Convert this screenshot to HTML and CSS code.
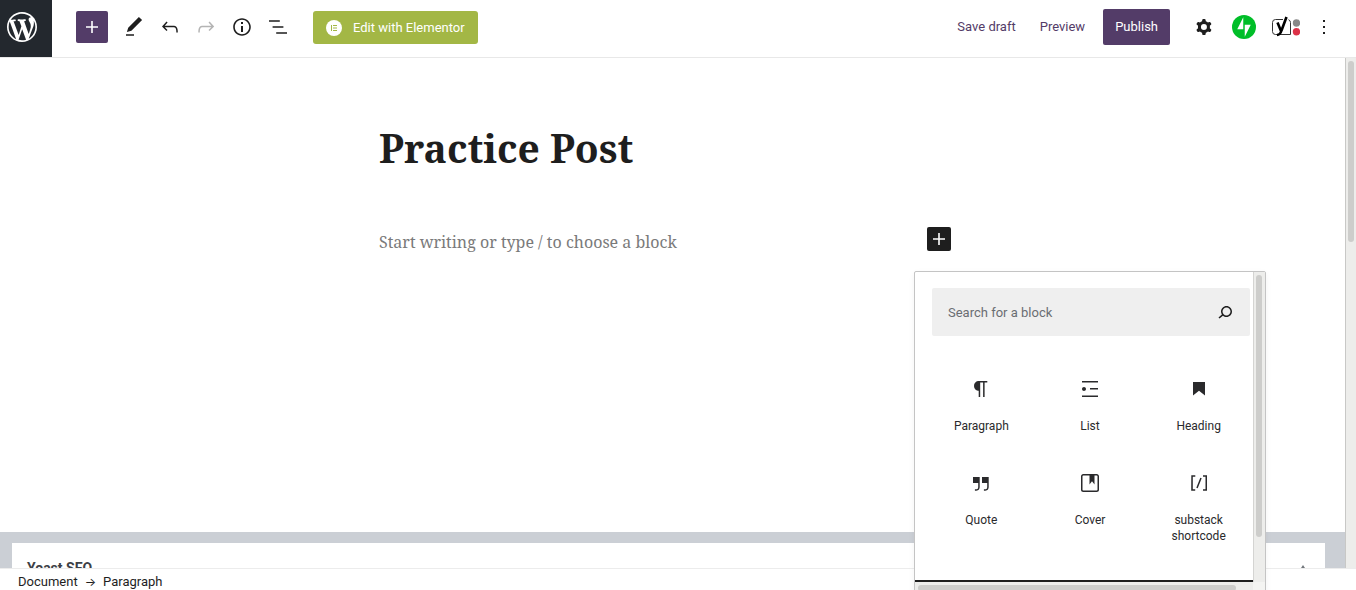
FILE: index.html
```html
<!DOCTYPE html>
<html lang="en">
<head>
    <meta charset="UTF-8">
    <meta name="viewport" content="width=device-width,initial-scale=1">
    <title>Edit Post</title>
    <link rel="stylesheet" href="styles.css">
</head>
<body>
<div class="editor">
    <header class="header">
        <a href="#" class="site-link" aria-label="View posts">
            <svg width="36" height="36" viewBox="-2 -2 24 24"><path d="M20 10c0-5.51-4.49-10-10-10C4.48 0 0 4.49 0 10c0 5.52 4.48 10 10 10 5.51 0 10-4.48 10-10zM7.78 15.37L4.37 6.22c.55-.02 1.17-.08 1.17-.08.5-.06.44-1.13-.06-1.11 0 0-1.45.11-2.37.11-.18 0-.37 0-.58-.01C4.12 2.69 6.87 1.11 10 1.11c2.33 0 4.45.87 6.05 2.34-.68-.11-1.65.39-1.65 1.58 0 .74.45 1.36.9 2.1.35.61.55 1.36.55 2.46 0 1.49-1.4 5-1.4 5l-3.03-8.37c.54-.02.82-.17.82-.17.5-.05.44-1.25-.06-1.22 0 0-1.44.12-2.38.12-.87 0-2.33-.12-2.33-.12-.5-.03-.56 1.2-.06 1.22l.92.08 1.26 3.41zM17.41 10c.24-.64.74-1.87.43-4.25.7 1.29 1.05 2.71 1.05 4.25 0 3.29-1.73 6.24-4.4 7.78.97-2.59 1.94-5.2 2.92-7.78zM6.1 18.09C3.12 16.65 1.11 13.53 1.11 10c0-1.3.23-2.48.72-3.59C3.25 10.3 4.67 14.2 6.1 18.09zm4.03-6.63l2.58 6.98c-.86.29-1.76.45-2.71.45-.79 0-1.57-.11-2.29-.33.81-2.38 1.62-4.74 2.42-7.1z"/></svg>
        </a>
        <div class="tools">
            <button type="button" class="inserter" aria-label="Add block">
                <svg width="24" height="24" viewBox="0 0 24 24"><path d="M18 11.2h-5.2V6h-1.6v5.2H6v1.6h5.2V18h1.6v-5.2H18z"/></svg>
            </button>
            <button type="button" class="tool" aria-label="Tools">
                <svg width="24" height="24" viewBox="0 0 24 24"><path d="M20.1 5.1L16.9 2 6.2 12.7l-1.3 4.4 4.5-1.3L20.1 5.1zM4 20.8h8v-1.5H4v1.5z"/></svg>
            </button>
            <button type="button" class="tool" aria-label="Undo">
                <svg width="24" height="24" viewBox="0 0 24 24"><path d="M18.3 11.7c-.6-.6-1.4-.9-2.3-.9H6.7l2.9-3.3-1.1-1-4.5 5L8.5 16l1-1-2.7-2.7H16c.5 0 .9.2 1.3.5 1 1 1 3.4 1 4.5v.3h1.5v-.2c0-1.5 0-4.3-1.5-5.7z"/></svg>
            </button>
            <button type="button" class="tool" aria-label="Redo" disabled>
                <svg width="24" height="24" viewBox="0 0 24 24"><path d="M15.6 6.5l-1.1 1 2.9 3.3H8c-.9 0-1.7.3-2.3.9-1.4 1.5-1.4 4.2-1.4 5.6v.2h1.5v-.3c0-1.1 0-3.5 1-4.5.3-.3.7-.5 1.3-.5h9.2L14.5 15l1.1 1.1 4.6-4.6-4.6-5z"/></svg>
            </button>
            <button type="button" class="tool" aria-label="Details">
                <svg width="24" height="24" viewBox="0 0 24 24"><path d="M12 3.2c-4.8 0-8.8 3.9-8.8 8.8 0 4.8 3.9 8.8 8.8 8.8 4.8 0 8.8-3.9 8.8-8.8 0-4.8-4-8.8-8.8-8.8zm0 16c-4 0-7.2-3.3-7.2-7.2C4.8 8 8 4.8 12 4.8s7.2 3.3 7.2 7.2c0 4-3.2 7.2-7.2 7.2zM11 17h2v-6h-2v6zm0-8h2V7h-2v2z"/></svg>
            </button>
            <button type="button" class="tool" aria-label="List view">
                <svg width="24" height="24" viewBox="0 0 24 24"><path d="M13.8 5.2H3v1.5h10.8V5.2zm-3.6 12v1.5H21v-1.5H10.2zm7.2-6H6.6v1.5h10.8v-1.5z"/></svg>
            </button>
        </div>
        <button type="button" class="elementor">
            <svg width="16" height="16" viewBox="0 0 16 16"><circle cx="8" cy="8" r="8"/><path class="cut" d="M5 5h1v6H5zM7 5h4v1H7zM7 7.500h4v1H7zM7 10h4v1H7z"/></svg>
            Edit with Elementor
        </button>
        <div class="settings">
            <button type="button" class="text-btn">Save draft</button>
            <button type="button" class="text-btn">Preview</button>
            <button type="button" class="publish">Publish</button>
            <button type="button" class="tool" aria-label="Settings">
                <svg width="24" height="24" viewBox="0 0 24 24"><path fill-rule="evenodd" d="M10.289 4.836A1 1 0 0111.275 4h1.306a1 1 0 01.987.836l.244 1.466c.787.26 1.503.679 2.108 1.218l1.393-.522a1 1 0 011.216.437l.653 1.13a1 1 0 01-.23 1.273l-1.148.944a6.025 6.025 0 010 2.435l1.149.946a1 1 0 01.23 1.272l-.653 1.13a1 1 0 01-1.216.437l-1.394-.522c-.605.54-1.32.958-2.108 1.218l-.244 1.466a1 1 0 01-.987.836h-1.306a1 1 0 01-.986-.836l-.244-1.466a5.995 5.995 0 01-2.108-1.218l-1.394.522a1 1 0 01-1.217-.436l-.653-1.131a1 1 0 01.23-1.272l1.149-.946a6.026 6.026 0 010-2.435l-1.148-.944a1 1 0 01-.23-1.272l.653-1.131a1 1 0 011.217-.437l1.393.522a5.994 5.994 0 012.108-1.218l.244-1.466zM14.929 12a3 3 0 11-6 0 3 3 0 016 0z"/></svg>
            </button>
            <button type="button" class="tool" aria-label="Jetpack">
                <svg width="24" height="24" viewBox="0 0 32 32"><circle fill="#00be28" cx="16" cy="16" r="16"/><path fill="#fff" d="M15 19H7l8-16zM17 29V13h8z"/></svg>
            </button>
            <button type="button" class="tool yoast" aria-label="Yoast SEO">
                <svg width="28" height="24" viewBox="0 0 28 24"><path fill="none" stroke="#333" d="M11 4.500H3.500a3 3 0 0 0-3 3v9a3 3 0 0 0 3 3H18.500V7.500a3 3 0 0 0-2-2.800"/><path fill="none" stroke="#000" stroke-width="2.600" d="M5.500 7.500l3.500 8.500M14.500 2L9.500 15.500c-.8 2.800-1.800 4.500-4.500 4.500"/><circle fill="#888" cx="24.500" cy="8" r="3.700"/><circle fill="#dc3248" cx="24.500" cy="16.700" r="3.700"/></svg>
            </button>
            <button type="button" class="tool" aria-label="Options">
                <svg width="24" height="24" viewBox="0 0 24 24"><path d="M13 19h-2v-2h2v2zm0-6h-2v-2h2v2zm0-6h-2V5h2v2z"/></svg>
            </button>
        </div>
    </header>

    <div class="body">
        <main class="content">
            <div class="canvas">
                <div class="post">
                    <h1 class="post-title">Practice Post</h1>
                    <div class="block">
                        <input type="text" class="block-text" aria-label="Empty block" placeholder="Start writing or type / to choose a block">
                        <div class="appender">
                            <button type="button" class="appender-btn" aria-label="Add block">
                                <svg width="24" height="24" viewBox="0 0 24 24"><path d="M18 11.2h-5.2V6h-1.6v5.2H6v1.6h5.2V18h1.6v-5.2H18z"/></svg>
                            </button>
                            <!-- quick inserter -->
                            <div class="popover">
                                <div class="popover-main">
                                    <div class="search">
                                        <input type="text" aria-label="Search for a block" placeholder="Search for a block">
                                        <button type="button" aria-label="Search">
                                            <svg width="24" height="24" viewBox="0 0 24 24"><path d="M13.5 6C10.5 6 8 8.5 8 11.500c0 1.100.3 2.100.9 3l-3.400 3 1 1.100 3.400-2.900c1 .9 2.200 1.400 3.600 1.400 3 0 5.500-2.500 5.500-5.500C19 8.500 16.500 6 13.500 6zm0 9.500c-2.200 0-4-1.800-4-4s1.800-4 4-4 4 1.800 4 4-1.800 4-4 4z"/></svg>
                                        </button>
                                    </div>
                                    <div class="types">
                                        <button type="button">
                                            <svg width="24" height="24" viewBox="0 0 24 24"><path d="M18.300 4H9.900v-.1l-.9.2c-2.300.4-4 2.400-4 4.800s1.700 4.400 4 4.800l.7.1V20h1.500V5.500h2.900V20h1.500V5.500h2.700V4z"/></svg>
                                            Paragraph
                                        </button>
                                        <button type="button">
                                            <svg width="24" height="24" viewBox="0 0 24 24"><path d="M4 4v1.500h16V4H4zm8 8.500h8V11h-8v1.500zM4 20h16v-1.500H4V20zm4-8c0-1.100-.9-2-2-2s-2 .9-2 2 .9 2 2 2 2-.9 2-2z"/></svg>
                                            List
                                        </button>
                                        <button type="button">
                                            <svg width="24" height="24" viewBox="0 0 24 24"><path d="M6 5v13.600l6-4.800 6 4.800V5z"/></svg>
                                            Heading
                                        </button>
                                        <button type="button">
                                            <svg width="24" height="24" viewBox="0 0 24 24"><path d="M13 6v6h5.200v4c0 .8-.2 1.400-.5 1.700-.6.6-1.600.6-2.500.5h-.3v1.500h.5c1 0 2.300-.1 3.300-1 .6-.6 1-1.600 1-2.800V6H13zm-9 6h5.200v4c0 .8-.2 1.400-.5 1.700-.6.6-1.600.6-2.500.5h-.3v1.500h.5c1 0 2.300-.1 3.300-1 .6-.6 1-1.600 1-2.800V6H4v6z"/></svg>
                                            Quote
                                        </button>
                                        <button type="button">
                                            <svg width="24" height="24" viewBox="0 0 24 24"><path d="M18.700 3H5.300C4 3 3 4 3 5.300v13.400C3 20 4 21 5.300 21h13.400c1.300 0 2.300-1 2.300-2.300V5.300C21 4 20 3 18.700 3zm.8 15.700c0 .4-.4.8-.8.8H5.300c-.4 0-.8-.4-.8-.8V5.300c0-.4.4-.8.8-.8h6.200v8.900l2.500-3.100 2.500 3.100V4.500h2.200c.4 0 .8.4.8.8v13.400z"/></svg>
                                            Cover
                                        </button>
                                        <button type="button">
                                            <svg width="24" height="24" viewBox="0 0 24 24"><path d="M16 4.200v1.500h2.500v12.500H16v1.500h4V4.200h-4zM4.200 19.800h4v-1.500H5.800V5.800h2.500V4.200h-4l-.1 15.600zm5.100-3.100l1.400.6 4-10-1.400-.6-4 10z"/></svg>
                                            substack shortcode
                                        </button>
                                    </div>
                                    <div class="browse"></div>
                                </div>
                                <div class="bar bar-v"><span></span></div>
                                <div class="bar bar-h"><span></span></div>
                                <div class="bar-corner"></div>
                            </div>
                        </div>
                    </div>
                </div>
            </div>
            <div class="metaboxes">
                <section class="metabox">
                    <h2>Yoast SEO</h2>
                    <button type="button" aria-label="Toggle panel">
                        <svg width="8" height="6" viewBox="0 0 8 6"><path d="M4 0l4 6H0z"/></svg>
                    </button>
                </section>
            </div>
        </main>
        <div class="page-scroll"><span></span></div>
    </div>

    <footer class="footer">
        <a href="#">Document</a>
        <span class="arrow">→</span>
        <a href="#">Paragraph</a>
    </footer>
</div>
</body>
</html>
```

FILE: styles.css
```css
*{ box-sizing:border-box;}
html,body{ height:100%; }
body,h1,h2{ margin:0; padding:0;}
body{
    overflow:hidden;
    font:13px/20px Roboto,"Liberation Sans",sans-serif;
    color:#1e1e1e;
    background:#fff;
}
button,input{ font:inherit; color:inherit; border:0; padding:0; margin:0; background:none;}
button{ display:flex; align-items:center; justify-content:center;}
svg{ display:block; flex:none; fill:currentColor;}
a{ color:inherit; text-decoration:none;}

.editor{ display:flex; flex-direction:column; height:100vh; overflow:hidden;}

/* top bar */
.header{
    flex:none;
    display:flex;
    align-items:center;
    height:58px;
    padding:0 14px 3px 0;
    border-bottom:1px solid #e8e8e8;
}
.site-link{
    align-self:flex-start;
    width:52px;
    height:57px;
    padding:9px 4px;
    color:#fff;
    background:#23282e;
}
.tools{ display:flex; align-items:center; margin:0 17px 0 24px;}
.header .tool{ width:36px; height:36px;}
.header .tool:disabled{ color:#b4b4b4;}
.inserter{
    width:32px;
    height:32px;
    margin-right:8px;
    border-radius:2px;
    color:#fff;
    background:#533c68;
}
.elementor{
    gap:11px;
    height:33px;
    padding:1px 13px 0;
    border-radius:3px;
    color:#fff;
    background:#a3b745;
}
.elementor .cut{ fill:#a3b745;}
.settings{ display:flex; align-items:center; margin-left:auto;}
.settings .tool{ margin-left:4px;}
.settings .yoast{ padding-left:4px;}
.text-btn{ height:36px; padding:0 12px; color:#533c68;}
.publish{
    height:36px;
    margin:0 12px 0 6px;
    padding:0 12px;
    border-radius:2px;
    color:#fff;
    background:#533c68;
}

/* writing area */
.body{ flex:1; display:flex; min-height:0;}
.content{ flex:1; display:flex; flex-direction:column; min-width:0;}
.canvas{ flex:1; min-height:0; padding:60px 15px 0 0;}
.post{ width:572px; margin:0 auto;}
.post-title{
    font:bold 39px/60px "Noto Serif","Droid Serif","DejaVu Serif Condensed",serif;
}
.block{ display:flex; align-items:flex-start; margin-top:49px;}
.block-text{
    flex:1;
    min-width:0;
    height:30px;
    font:16px/28px "Noto Serif","Droid Serif","DejaVu Serif Condensed",serif;
    outline:0;
}
.block-text::placeholder{ color:#7a7a7a; opacity:1;}
.appender{ position:relative;}
.appender-btn{
    width:24px;
    height:24px;
    border-radius:2px;
    color:#fff;
    background:#1e1e1e;
}

/* quick inserter */
.popover{
    position:absolute;
    z-index:10;
    top:44px;
    left:-13px;
    display:grid;
    grid-template-columns:1fr 12px;
    width:352px;
    border:1px solid #c4c4c4;
    border-radius:2px;
    background:#fff;
    box-shadow:0 2px 6px rgba(0,0,0,.05);
}
.popover-main{ min-width:0;}
.search{
    display:flex;
    align-items:center;
    height:48px;
    margin:16px 3px 0 17px;
    padding:0 13px 0 16px;
    border-radius:2px;
    background:#efefef;
}
.search input{ flex:1; min-width:0; height:24px; padding-top:1px; outline:0;}
.search input::placeholder{ color:#6a6d72; opacity:1;}
.types{
    display:grid;
    grid-template-columns:repeat(3,1fr);
    grid-auto-rows:94px;
    padding:33px 0 23px 12px;
}
.types button{
    flex-direction:column;
    justify-content:flex-start;
    gap:17px;
    padding:8px 20px 0;
    font-size:12px;
    line-height:16px;
    color:#2a2a2c;
}
.browse{ height:2px; background:#1e1e1e;}

/* scrollbars */
.bar{ background:#ededeb;}
.bar span{ display:block; border-radius:3px; background:#cdcdcb;}
.bar-v{ padding:3px 3px 0 2px; border-left:1px solid #d4d4d2;}
.bar-v span{ width:6px; height:262px;}
.bar-h{ height:12px; padding:3px;}
.bar-h span{ width:318px; height:6px;}
.bar-corner{ background:#f4f4f2;}
.page-scroll{
    width:11px;
    padding:3px 2px 0;
    border-left:1px solid #c8c8c6;
    background:#ededeb;
}
.page-scroll span{ display:block; width:6px; height:181px; border-radius:3px; background:#cdcdcb;}

/* meta boxes */
.metaboxes{
    flex:none;
    height:36px;
    padding:11px 20px 0 12px;
    overflow:hidden;
    background:#cbcfd5;
}
.metabox{
    display:flex;
    justify-content:space-between;
    align-items:center;
    height:50px;
    padding:0 18px 0 15px;
    background:#fff;
}
.metabox h2{ font-size:14px; line-height:20px; color:#3c4046;}
.metabox button{ color:#72777c;}

.footer{
    flex:none;
    display:flex;
    align-items:center;
    gap:7px;
    height:22px;
    padding:4px 18px 0;
    line-height:16px;
    border-top:1px solid #ececec;
}
.footer .arrow{ font-family:Inter,"DejaVu Sans",sans-serif; font-size:12px;}
```
